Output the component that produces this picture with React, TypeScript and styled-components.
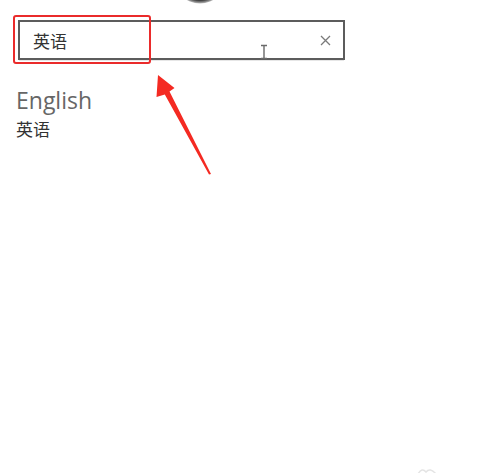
import React from 'react';
import styled, { createGlobalStyle } from 'styled-components';

const GlobalStyle = createGlobalStyle`
  html, body {
    margin: 0;
    padding: 0;
    background: #ffffff;
  }
  * {
    box-sizing: border-box;
  }
`;

const App = () => {
  return (
    <>
      <GlobalStyle />
      <Page>
        <AvatarEdge viewBox="0 0 500 6" aria-hidden>
          <defs>
            <radialGradient id="av" cx="0.5" cy="0.5" r="0.5">
              <stop offset="0.85" stopColor="#1a1a1a" />
              <stop offset="1" stopColor="#bdbdbd" />
            </radialGradient>
          </defs>
          <circle cx="200" cy="-23" r="26.5" fill="url(#av)" />
        </AvatarEdge>

        <SearchBox>
          <SearchText>英语</SearchText>
          <ClearButton aria-label="clear">
            <svg width="11" height="11" viewBox="0 0 11 11">
              <path d="M1 1 L10 10 M10 1 L1 10" stroke="#7a7a7a" strokeWidth="1.3" />
            </svg>
          </ClearButton>
          <Highlight />
          <Caret viewBox="0 0 8 16" aria-hidden>
            <path d="M1 1.5 H7 M4 1.5 V14.5 M1 14.5 H7" stroke="#6a6a6a" strokeWidth="1.4" fill="none" />
          </Caret>
        </SearchBox>

        <Result>
          <ResultTitle>English</ResultTitle>
          <ResultSub>英语</ResultSub>
        </Result>

        <Arrow viewBox="0 0 500 473" aria-hidden>
          <polygon
            points="158,75 174.5,88 169.5,91.5 211,174 209,174.5 164.8,94.5 156.5,97"
            fill="#f42a22"
          />
        </Arrow>

        <Watermark viewBox="0 0 20 8" aria-hidden>
          <path d="M1 8 Q5 1 9 6 Q13 1 19 8" stroke="#e4e4e4" strokeWidth="1.5" fill="none" />
        </Watermark>
      </Page>
    </>
  );
};

export default App;

const Page = styled.main`
  position: relative;
  width: 500px;
  height: 473px;
  overflow: hidden;
  background: #ffffff;
`;

const AvatarEdge = styled.svg`
  display: block;
  width: 500px;
  height: 6px;
`;

const SearchBox = styled.div`
  position: relative;
  display: flex;
  align-items: center;
  justify-content: space-between;
  width: 327px;
  height: 40px;
  margin: 14px 0 0 18px;
  padding: 0 13px;
  border: 2px solid #5c5c5c;
  box-shadow: 0 2px 0 -1px #e6e6e6;
`;

const SearchText = styled.span`
  font-family: 'Noto Sans CJK SC', 'Noto Sans', sans-serif;
  font-size: 17px;
  color: #333333;
  line-height: 1;
`;

const ClearButton = styled.span`
  display: flex;
  align-items: center;
  margin-right: -1px;
`;

const Highlight = styled.div`
  position: absolute;
  left: -7px;
  top: -7px;
  width: 138px;
  height: 49px;
  border: 2px solid #ea2b2b;
  border-radius: 3px;
  pointer-events: none;
`;

const Caret = styled.svg`
  position: absolute;
  left: 240px;
  top: 22px;
  width: 8px;
  height: 16px;
`;

const Result = styled.section`
  display: flex;
  flex-direction: column;
  padding: 24px 0 0 16px;
`;

const ResultTitle = styled.div`
  font-family: 'Open Sans', 'Noto Sans', sans-serif;
  font-size: 23px;
  line-height: 32px;
  color: #666666;
`;

const ResultSub = styled.div`
  margin-top: 2px;
  font-family: 'Noto Sans CJK SC', sans-serif;
  font-size: 17px;
  line-height: 22px;
  color: #333333;
`;

const Arrow = styled.svg`
  position: absolute;
  left: 0;
  top: 0;
  width: 500px;
  height: 473px;
  pointer-events: none;
`;

const Watermark = styled.svg`
  position: absolute;
  left: 417px;
  top: 466px;
  width: 20px;
  height: 8px;
`;
